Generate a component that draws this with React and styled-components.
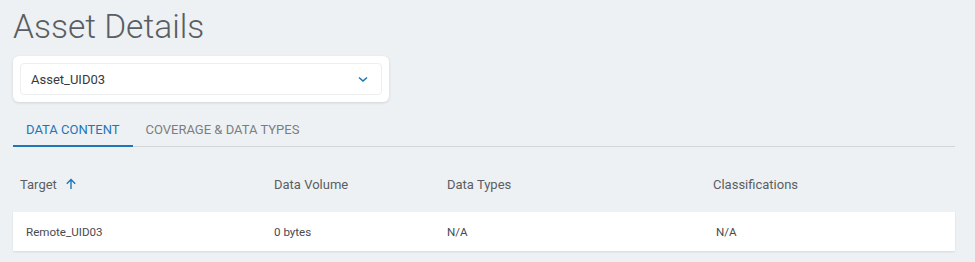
import React from 'react';
import styled, { createGlobalStyle } from 'styled-components';

const Global = createGlobalStyle`
  html, body {
    margin: 0;
    padding: 0;
    background: #eef1f3;
    font-family: Roboto, "Liberation Sans", sans-serif;
  }
`;

const Page = styled.div`
  padding: 0 20px 0 13px;
  height: 262px;
  box-sizing: border-box;
`;

const Title = styled.h1`
  margin: 0;
  padding-top: 5px;
  font-weight: 300;
  font-size: 33.5px;
  line-height: 43px;
  color: #5a5e62;
`;

const SelectCard = styled.div`
  margin-top: 8px;
  width: 376px;
  box-sizing: border-box;
  padding: 7px;
  background: #fff;
  border-radius: 6px;
  box-shadow: 0 1px 3px rgba(0, 0, 0, 0.12);
`;

const Select = styled.div`
  display: flex;
  align-items: center;
  justify-content: space-between;
  height: 32px;
  box-sizing: border-box;
  padding: 0 13px 0 10px;
  border: 1px solid #eceeef;
  border-radius: 4px;
  font-size: 13px;
  color: #35393d;
`;

const Tabs = styled.div`
  display: flex;
  margin-top: 9px;
  border-bottom: 1px solid #d3d6d8;
`;

const Tab = styled.div`
  height: 36px;
  padding: 0 13px;
  display: flex;
  align-items: center;
  font-size: 13px;
  color: ${p => (p.active ? '#1d76ba' : '#7a7e82')};
  box-shadow: ${p => (p.active ? 'inset 0 -2px 0 #1d76ba' : 'none')};
  margin-bottom: -1px;
`;

const Row = styled.div`
  display: grid;
  grid-template-columns: 261px 173px 266px 1fr;
  align-items: center;
`;

const HeadRow = styled(Row)`
  height: 36px;
  margin-top: 19px;
  font-size: 13px;
  color: #5a5e62;
`;

const BodyRow = styled(Row)`
  margin-top: 10px;
  height: 39px;
  background: #fff;
  font-size: 11.6px;
  color: #474b4f;
  box-shadow: 0 1px 2px rgba(0, 0, 0, 0.1);
`;

const Cell = styled.div`
  display: flex;
  align-items: center;
  gap: 8px;
  padding-left: ${p => p.pad || 0}px;
`;

const Chevron = () => (
  <svg width="10" height="7" viewBox="0 0 10 7">
    <path d="M1 1.5l4 3.5 4-3.5" fill="none" stroke="#1d76ba" strokeWidth="1.6" />
  </svg>
);

const ArrowUp = () => (
  <svg width="12" height="12" viewBox="0 0 12 12">
    <path d="M6 11V1.8M1.8 5.8L6 1.6l4.2 4.2" fill="none" stroke="#1d76ba" strokeWidth="1.4" />
  </svg>
);

export default function App() {
  return (
    <Page>
      <Global />
      <Title>Asset Details</Title>
      <SelectCard>
        <Select>
          <span>Asset_UID03</span>
          <Chevron />
        </Select>
      </SelectCard>
      <Tabs>
        <Tab active>DATA CONTENT</Tab>
        <Tab>COVERAGE &amp; DATA TYPES</Tab>
      </Tabs>
      <HeadRow>
        <Cell pad={7}>Target <ArrowUp /></Cell>
        <Cell>Data Volume</Cell>
        <Cell>Data Types</Cell>
        <Cell>Classifications</Cell>
      </HeadRow>
      <BodyRow>
        <Cell pad={13}>Remote_UID03</Cell>
        <Cell>0 bytes</Cell>
        <Cell>N/A</Cell>
        <Cell pad={3}>N/A</Cell>
      </BodyRow>
    </Page>
  );
}
